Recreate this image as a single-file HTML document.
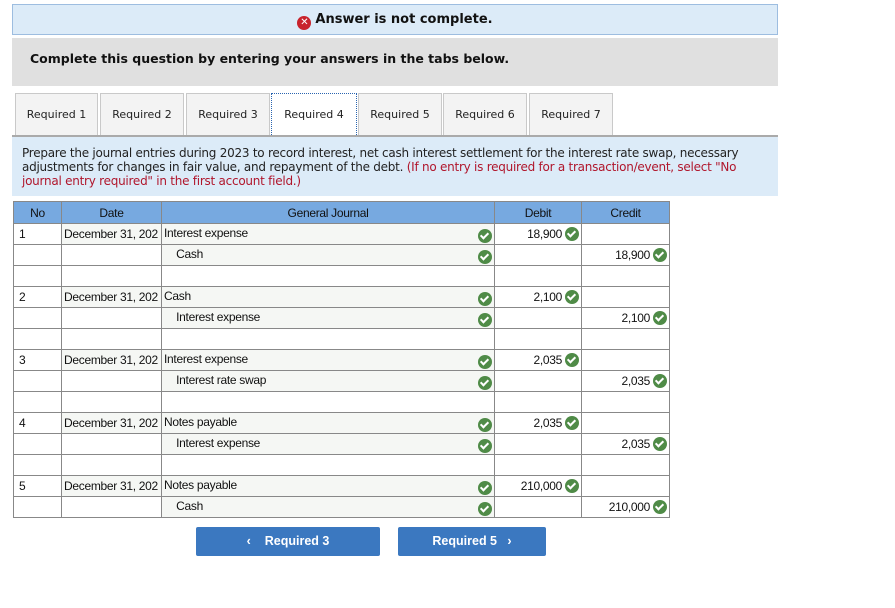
<!DOCTYPE html>
<html><head><meta charset="utf-8"><style>
*{box-sizing:border-box;margin:0;padding:0}
body{width:895px;height:608px;background:#fff;font-family:"DejaVu Sans",Verdana,sans-serif;position:relative;overflow:hidden}
.banner{position:absolute;left:12px;top:4px;width:766px;height:31px;background:#dcebf8;border:1px solid #9dbde0;text-align:center;font-size:13px;font-weight:bold;line-height:29px;color:#111}
.xic{display:inline-block;width:14px;height:14px;border-radius:50%;background:#c8232c;color:#fff;font-size:10px;line-height:14px;vertical-align:-2px;margin-right:4px}
.gray{position:absolute;left:12px;top:38px;width:766px;height:48px;background:#e0e0e0;font-size:12.5px;font-weight:bold;padding:13px 0 0 18px;color:#111}
.tab{position:absolute;top:93px;height:43px;background:#f3f3f3;border:1px solid #c9c9c9;border-bottom:none;font-size:11px;text-align:center;line-height:42px;color:#222}
.tab.act{background:#fff;border:1px dotted #2a64b0;border-bottom:none;height:44px}
.instr{position:absolute;left:12px;top:135px;width:766px;height:61px;background:#dcebf8;border-top:2px solid #aaa;font-size:12px;line-height:14px;padding:9px 8px 0 10px;color:#222;letter-spacing:-0.25px}
.red{color:#b0162c}
table{position:absolute;left:13px;top:201px;width:657px;border-collapse:collapse;table-layout:fixed;font-family:"Liberation Sans",Arial,sans-serif;font-size:12px;color:#111;letter-spacing:-0.3px}
th{background:#77a9e0;height:22px;border:1px solid #888;font-weight:normal;color:#111}
td{height:21px;border:1px solid #888;padding:0 2px;white-space:nowrap;overflow:hidden}
td.f{background:#f5f7f4}
.ck{display:inline-block;width:14px;height:14px;border-radius:50%;background:#4f8b47;vertical-align:-3px;position:relative;margin-left:3px}
.ck:after{content:"";position:absolute;left:4px;top:2px;width:3px;height:6px;border:solid #fff;border-width:0 2px 2px 0;transform:rotate(45deg)}
.r{text-align:right}
.btn{position:absolute;top:527px;height:29px;background:#3b78c0;color:#fff;font-family:"Liberation Sans",Arial,sans-serif;font-weight:bold;font-size:12.5px;text-align:center;line-height:29px;border-radius:2px}
</style></head><body>
<div class="banner"><span class="xic">✕</span>Answer is not complete.</div>
<div class="gray">Complete this question by entering your answers in the tabs below.</div>
<div class="tab" style="left:15px;width:83px">Required 1</div>
<div class="tab" style="left:100px;width:84px">Required 2</div>
<div class="tab" style="left:186px;width:84px">Required 3</div>
<div class="tab act" style="left:271px;width:86px">Required 4</div>
<div class="tab" style="left:358px;width:84px">Required 5</div>
<div class="tab" style="left:443px;width:84px">Required 6</div>
<div class="tab" style="left:529px;width:84px">Required 7</div>
<div class="instr">Prepare the journal entries during 2023 to record interest, net cash interest settlement for the interest rate swap, necessary adjustments for changes in fair value, and repayment of the debt. <span class="red">(If no entry is required for a transaction/event, select "No journal entry required" in the first account field.)</span></div>
<table>
<colgroup><col style="width:48px"><col style="width:100px"><col style="width:333px"><col style="width:87px"><col style="width:88px"></colgroup>
<tr><th>No</th><th>Date</th><th>General Journal</th><th>Debit</th><th>Credit</th></tr>
<tr><td>&nbsp;1</td><td class="f">December 31, 202</td><td class="f">Interest expense<span class="ck" style="float:right;margin-top:3px"></span></td><td class="r">18,900<span class="ck"></span></td><td></td></tr>
<tr><td></td><td></td><td class="f">&nbsp;&nbsp;&nbsp;&nbsp;Cash<span class="ck" style="float:right;margin-top:3px"></span></td><td></td><td class="r">18,900<span class="ck"></span></td></tr>
<tr><td></td><td></td><td></td><td></td><td></td></tr>
<tr><td>&nbsp;2</td><td class="f">December 31, 202</td><td class="f">Cash<span class="ck" style="float:right;margin-top:3px"></span></td><td class="r">2,100<span class="ck"></span></td><td></td></tr>
<tr><td></td><td></td><td class="f">&nbsp;&nbsp;&nbsp;&nbsp;Interest expense<span class="ck" style="float:right;margin-top:3px"></span></td><td></td><td class="r">2,100<span class="ck"></span></td></tr>
<tr><td></td><td></td><td></td><td></td><td></td></tr>
<tr><td>&nbsp;3</td><td class="f">December 31, 202</td><td class="f">Interest expense<span class="ck" style="float:right;margin-top:3px"></span></td><td class="r">2,035<span class="ck"></span></td><td></td></tr>
<tr><td></td><td></td><td class="f">&nbsp;&nbsp;&nbsp;&nbsp;Interest rate swap<span class="ck" style="float:right;margin-top:3px"></span></td><td></td><td class="r">2,035<span class="ck"></span></td></tr>
<tr><td></td><td></td><td></td><td></td><td></td></tr>
<tr><td>&nbsp;4</td><td class="f">December 31, 202</td><td class="f">Notes payable<span class="ck" style="float:right;margin-top:3px"></span></td><td class="r">2,035<span class="ck"></span></td><td></td></tr>
<tr><td></td><td></td><td class="f">&nbsp;&nbsp;&nbsp;&nbsp;Interest expense<span class="ck" style="float:right;margin-top:3px"></span></td><td></td><td class="r">2,035<span class="ck"></span></td></tr>
<tr><td></td><td></td><td></td><td></td><td></td></tr>
<tr><td>&nbsp;5</td><td class="f">December 31, 202</td><td class="f">Notes payable<span class="ck" style="float:right;margin-top:3px"></span></td><td class="r">210,000<span class="ck"></span></td><td></td></tr>
<tr><td></td><td></td><td class="f">&nbsp;&nbsp;&nbsp;&nbsp;Cash<span class="ck" style="float:right;margin-top:3px"></span></td><td></td><td class="r">210,000<span class="ck"></span></td></tr>
</table>
<div class="btn" style="left:196px;width:184px">&lsaquo;&nbsp;&nbsp;&nbsp; Required 3</div>
<div class="btn" style="left:398px;width:148px">Required 5 &nbsp;&nbsp;&rsaquo;</div>
</body></html>
